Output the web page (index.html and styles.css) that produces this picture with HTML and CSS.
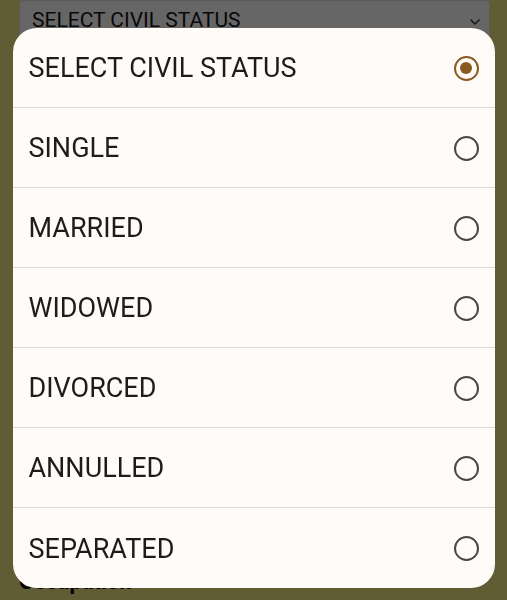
FILE: index.html
```html
<!DOCTYPE html>
<html>
<head>
<meta charset="utf-8">
<link rel="stylesheet" href="styles.css">
</head>
<body>
<div class="page">
  <div class="select">
    <span class="select-text">SELECT CIVIL STATUS</span>
    <svg class="chev" width="12" height="8" viewBox="0 0 12 8"><path d="M1.5 1.5 L6 6 L10.5 1.5" fill="none" stroke="#2a2a2a" stroke-width="1.4"/></svg>
  </div>
  <div class="label">Occupation</div>
</div>
<div class="scrim"></div>
<div class="dialog">
  <div class="row"><span>SELECT CIVIL STATUS</span><span class="radio on"></span></div>
  <div class="row"><span>SINGLE</span><span class="radio"></span></div>
  <div class="row"><span>MARRIED</span><span class="radio"></span></div>
  <div class="row"><span>WIDOWED</span><span class="radio"></span></div>
  <div class="row"><span>DIVORCED</span><span class="radio"></span></div>
  <div class="row"><span>ANNULLED</span><span class="radio"></span></div>
  <div class="row"><span>SEPARATED</span><span class="radio"></span></div>
</div>
</body>
</html>
```
FILE: styles.css
```css
html, body {
  margin: 0;
  padding: 0;
  width: 507px;
  height: 600px;
  overflow: hidden;
  background: #c9c16b;
  font-family: Roboto, "Noto Sans", sans-serif;
}
.page {
  padding: 0 17px 0 19px;
}
.select {
  height: 56px;
  background: #d6d6d6;
  border: 1px solid #bdbdbd;
  border-radius: 4px;
  display: flex;
  align-items: flex-start;
  justify-content: space-between;
  padding: 7px 8px 0 12px;
  box-sizing: border-box;
}
.select-text {
  font-size: 21px;
  color: #111;
}
.chev { margin-top: 10px; }
.label {
  margin-top: 513px;
  font-size: 22px;
  font-weight: 700;
  color: #000;
}
.scrim {
  position: fixed;
  inset: 0;
  background: rgba(0, 0, 0, 0.52);
}
.dialog {
  position: fixed;
  left: 13px;
  top: 28px;
  width: 482px;
  background: #fffbf8;
  border-radius: 24px;
  overflow: hidden;
}
.row {
  height: 80px;
  box-sizing: border-box;
  display: flex;
  align-items: center;
  justify-content: space-between;
  padding: 1px 16px 0 15.5px;
  font-size: 27px;
  color: #1f1b16;
  border-bottom: 1px solid #dcd8d4;
}
.row:last-child { border-bottom: none; }
.radio {
  width: 25px;
  height: 25px;
  border-radius: 50%;
  border: 2.2px solid #4e4640;
  box-sizing: border-box;
  position: relative;
}
.radio.on {
  border-color: #8b5a1e;
}
.radio.on::after {
  content: "";
  position: absolute;
  left: 4.3px;
  top: 4.3px;
  width: 12px;
  height: 12px;
  border-radius: 50%;
  background: #8b5a1e;
}
```
